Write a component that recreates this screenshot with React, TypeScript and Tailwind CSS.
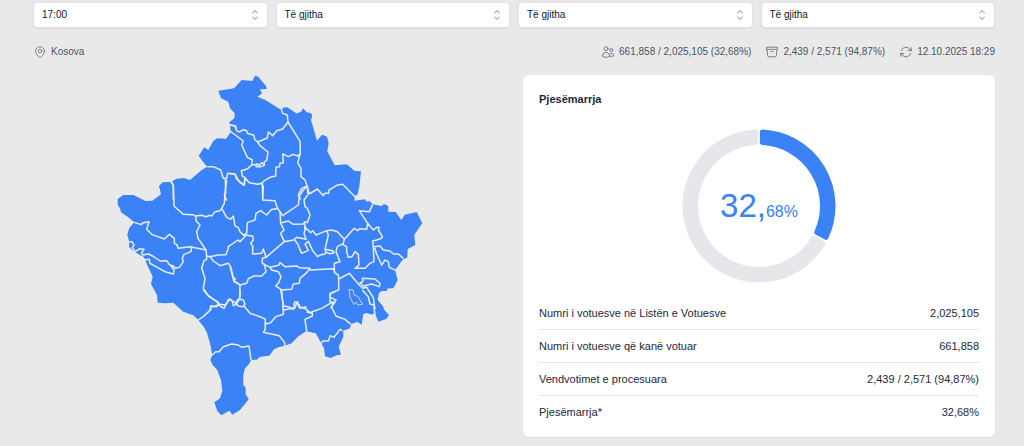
import { HiChevronUpDown, HiOutlineArchiveBox, HiOutlineArrowPath, HiOutlineMapPin, HiOutlineUsers } from 'react-icons/hi2';

const filters = [
  { id: 'time', label: 'Ora', value: '17:00' },
  { id: 'municipality', label: 'Komuna', value: 'Të gjitha' },
  { id: 'center', label: 'Qendra e votimit', value: 'Të gjitha' },
  { id: 'station', label: 'Vendvotimi', value: 'Të gjitha' },
];

const rows = [
  { label: 'Numri i votuesve në Listën e Votuesve', value: '2,025,105' },
  { label: 'Numri i votuesve që kanë votuar', value: '661,858' },
  { label: 'Vendvotimet e procesuara', value: '2,439 / 2,571 (94,87%)' },
  { label: 'Pjesëmarrja*', value: '32,68%' },
];

const outline =
  'M255,75.7 L258,76.5 266,86 266.7,89 260,89.3 262,93.5 257.3,96.7 265,99.7 281.7,110.3 283.3,107.6 287.3,107.3 296.7,113.5 301,111.7 303,108.3 306.7,112.3 311,113.3 312.3,115.3 311,120 317,140.7 322,134.7 327,136.7 328.7,143.3 327.3,151.3 334.7,165.3 346.7,164.3 354.7,171 361,171.3 359.3,186.7 357.3,195 354.3,196 354.7,200.7 365,199.3 366.7,201.7 369.5,201 372.7,204.3 381.7,206 384,204 388.3,206 388.3,211.7 395.7,212 401.3,220 404.7,214.7 416.7,212 422.3,223.3 414.3,234.7 415.3,245 407.7,249 407.3,257.7 403.3,259 395,270 397.7,280 393.3,288.3 387.5,288.5 387,291 381.7,291 379,293 377.7,300 383.3,306.7 384,309.5 389,315.3 386,319 378.3,321.7 375,313.3 371,314.5 367,313 363.3,314 361.7,325 357.3,321.7 351,324.3 350,328.3 343.3,330.7 343.3,336.7 338.7,346.7 341,355 337.3,355 330.7,358 325,356.3 324,348.3 321.3,343.3 315.7,333.3 306,331.3 298,336.5 291.7,343.3 284.7,345.7 278.3,347.3 274,349.3 269.3,355.7 260,356.7 256.7,359.7 251,360 249,364.3 245,368.3 243.3,375 243.3,385 245.7,387.7 245.7,394.3 248.7,399.3 240,410 232.3,414.7 229.3,410.7 221.3,415.3 217.3,411 214.3,402.3 220,398.3 222.3,391 221,380 217.3,370 212.7,365 210.3,360 212.3,355 210,343.3 207,333 204,327.3 198.3,320 193.3,315.3 183.3,311.7 173.3,302.7 165,303.3 157.7,302.7 157,295 151,284 152.7,276.7 145,260 141.7,256 133.3,251 129,246.7 129.3,241.7 127.3,235 129.3,227.7 134.3,222.3 128.3,217.3 121,212.3 120,208.3 117.7,205 117.7,199 123.3,195 133.3,195 140,198.3 145.7,201 152.3,200.7 161,194.3 159,186 162.7,182.3 171,182 176.7,178.7 184,178 190,180 201.7,170 207.3,166.7 203.3,162.3 198.7,155.7 204.3,147.3 208.3,150 213.3,141 217.3,138.3 226,138.7 230.7,132.3 230,125 229.3,122.3 234.3,118.3 234.7,113.3 230,108.3 228.3,101.7 221,98.3 218.3,90.7 234,88.3 241.7,80 252.3,81 Z';

// Municipality borders, grouped by region; each region has its own local origin at triple scale.
const regions = [
  {
    id: 'north-west',
    transform: 'translate(110 70) scale(0.33333)',
    d: 'M360,165 L376,168 380,178 M292,290 L310,290 332,300 340,325 350,325 353,310 375,312 379,326 402,346 405,325 M346,325 L347,370 343,372 350,392 M183,334 L190,345 190,390',
  },
  {
    id: 'north-east',
    transform: 'translate(230 70) scale(0.33333)',
    d: 'M0,165 L15,167 20,182 28,186 40,179 50,182 52,190 72,196 74,208 83,216 112,204 115,186 128,197 140,182 158,177 174,156 M155,121 L158,130 172,135 174,156 210,214 211,250 203,278 213,296 213,320 225,330 232,350 238,372 M0,183 L40,213 35,225 52,262 67,270 65,285 53,296 34,302 37,318 45,323 58,338 82,343 95,340 103,332 120,322 137,318 138,292 148,290 150,280 160,278 158,252 175,260 190,253 203,258 211,250 M83,216 L90,227 114,246 110,272 103,275 103,286 92,290 78,290 80,283 67,285 M80,280 L88,286 95,278 104,285 M45,323 L43,346 28,336 15,312 0,311 M95,340 L100,350 98,388 M238,372 L262,357 280,377 284,370 296,370 297,360 320,346 338,343 375,380 M232,348 L215,355 205,375 212,388',
  },
  {
    id: 'west',
    transform: 'translate(110 180) scale(0.33333)',
    d: 'M183,6 L190,15 192,78 220,103 248,104 257,108 275,106 288,110 300,106 305,108 315,95 330,92 335,85 343,70 345,40 350,0 M335,85 L350,112 362,118 370,108 375,138 385,143 390,155 400,165 408,166 M257,108 L258,122 270,135 260,155 264,175 288,210 290,228 300,230 M73,127 L93,134 100,128 117,125 110,148 125,163 163,177 178,163 193,175 193,190 200,194 205,205 240,200 288,210 M245,200 L243,215 222,223 217,235 220,245 208,262 196,265 190,258 178,254 170,242 150,243 128,228 115,222 98,225 95,218 102,208 90,206 75,215 67,203 72,195 66,185 58,185 M95,228 L105,240 118,238 120,250 165,275 190,282 192,270 183,258 M300,230 L325,225 348,224 355,205 355,200 384,180 390,185 408,166 M300,230 L310,243 330,257 355,250 362,260 370,293 376,296 372,303 390,315 M290,228 L290,238 282,242 275,265 285,295 280,325 295,347 327,370 320,380 302,378 300,390 M327,372 L345,375 360,357 378,370 382,360 389,355 390,315',
  },
  {
    id: 'east',
    transform: 'translate(230 180) scale(0.33333)',
    d: 'M97,8 L98,60 135,62 142,84 158,107 205,75 208,48 220,30 232,18 M142,84 L135,88 125,88 110,105 92,92 78,100 75,120 52,128 50,160 40,165 M48,166 L68,168 70,180 62,190 68,198 68,222 95,220 100,207 108,232 M150,95 L152,130 162,150 152,160 163,185 M155,128 L175,123 190,133 220,132 225,125 232,128 240,105 232,85 225,80 222,60 233,45 M232,18 L233,40 238,42 M225,130 L224,145 235,150 242,158 248,152 258,165 290,152 305,150 322,155 343,178 M163,185 L190,180 200,172 228,178 222,160 228,140 M343,178 L373,145 383,152 390,146 410,148 413,130 388,92 418,95 428,73 M413,130 L430,150 440,142 447,142 445,150 457,170 455,175 440,180 428,183 430,203 432,245 420,250 405,265 375,265 387,255 385,223 375,215 366,230 355,232 350,215 350,200 335,192 M343,178 L340,190 322,200 318,215 330,245 313,250 313,278 325,285 326,297 M290,152 L295,165 285,208 308,212 312,218 300,221 288,217 285,208 M163,185 L108,232 97,235 97,250 120,262 146,256 150,248 165,260 200,258 208,263 240,265 240,270 310,266 315,277 M193,178 L203,192 215,220 235,211 225,192 235,184 248,212 263,230 270,225 285,222 288,215 M120,262 L125,270 145,275 153,290 146,308 137,318 155,330 185,328 190,312 208,310 210,295 230,278 240,265 M102,250 L108,275 95,288 72,288 55,296 50,310 30,315 12,305 0,260 M155,330 L160,390 195,384 200,368 208,375 210,385 230,380 M326,297 L326,330 300,340 300,352 318,360 302,385 M326,297 L358,280 385,312 398,325 410,322 430,353 435,388 M388,310 L399,304 397,295 435,297 450,310 448,320 425,312 400,318 390,308 M434,203 L440,222 455,255 465,240 475,245 478,262 495,270 M430,200 L450,198 460,210 480,213 490,222 505,222 520,235',
  },
  {
    id: 'south',
    transform: 'translate(150 290) scale(0.33333)',
    d: 'M145,90 L160,80 183,58 182,48 190,50 205,45 203,36 175,18 160,0 M205,45 L222,55 236,28 246,32 250,47 262,42 M270,25 L270,0 M268,28 L280,30 285,43 278,50 264,48 260,40 Z M282,48 L300,70 330,80 345,87 347,102 362,98 377,80 400,73 400,45 395,15 392,0 M400,47 L420,52 430,58 434,36 443,36 446,50 465,55 480,68 493,63 515,55 550,35 M345,97 L346,117 340,127 388,137 404,158 404,167 M470,66 L487,70 487,78 465,88 470,124 M550,35 L545,52 558,78 585,88 603,103 M556,38 L540,35 540,12 558,3 M514,160 L518,153 535,153 541,137 552,142 570,118 578,122 M187,195 L197,185 207,185 220,170 245,162 265,165 275,172 297,168 303,210 M637,0 L655,20 660,42 672,45 672,55 675,72',
  },
];

function segment(start: number, end: number) {
  const outer = 74;
  const inner = 63.5;
  const pad = 3.4;
  const point = (radius: number, angle: number) =>
    `${(77 + radius * Math.sin(angle)).toFixed(2)},${(77 - radius * Math.cos(angle)).toFixed(2)}`;
  const from = start * 2 * Math.PI;
  const to = end * 2 * Math.PI;
  const large = end - start > 0.5 ? 1 : 0;
  return `M${point(outer, from + pad / outer)} A${outer},${outer} 0 ${large} 1 ${point(outer, to - pad / outer)} L${point(inner, to - pad / inner)} A${inner},${inner} 0 ${large} 0 ${point(inner, from + pad / inner)} Z`;
}

function KosovoMap() {
  return (
    <svg viewBox="110 70 320 350" className="w-80" role="img" aria-label="Harta e Kosovës">
      <path d={outline} fill="#3b82f6" />
      {regions.map((region) => (
        <path
          key={region.id}
          d={region.d}
          transform={region.transform}
          fill="none"
          stroke="#e9edf5"
          strokeWidth="4.5"
          strokeLinejoin="round"
        />
      ))}
      <path
        d="M349,289.5 L353,290 354,295 358,296.5 361,302 363,304 358,305 356,302 354,304.5 352,301 350,297 Z"
        fill="none"
        stroke="#bfd5fa"
        strokeWidth="1"
      />
    </svg>
  );
}

function TurnoutChart() {
  return (
    <div className="grid place-items-center">
      <svg viewBox="0 0 154 154" className="col-start-1 row-start-1 w-[154px]" aria-hidden="true">
        <path d={segment(0, 0.3268)} fill="#3b82f6" stroke="#3b82f6" strokeWidth="5" strokeLinejoin="round" />
        <path d={segment(0.3268, 1)} fill="#e5e7eb" stroke="#e5e7eb" strokeWidth="5" strokeLinejoin="round" />
      </svg>
      <p className="col-start-1 row-start-1 text-[33px] leading-10 text-[#3b82f6]">
        32,<span className="text-base">68%</span>
      </p>
    </div>
  );
}

export default function App() {
  return (
    <div className="min-h-screen bg-[#e9e9e9] pt-0.5 pr-[29px] pb-2 pl-[33px] font-['Liberation_Sans',Arial,sans-serif] text-gray-800">
      <form className="grid grid-cols-4 gap-2">
        {filters.map((filter) => (
          <div key={filter.id} className="grid items-center">
            <select
              id={filter.id}
              aria-label={filter.label}
              defaultValue={filter.value}
              className="col-start-1 row-start-1 w-full appearance-none rounded border border-gray-300/70 bg-white px-2 py-1 text-[10px] leading-4 text-gray-900 shadow-xs"
            >
              <option>{filter.value}</option>
            </select>
            <HiChevronUpDown className="pointer-events-none col-start-1 row-start-1 mr-[5px] size-4 justify-self-end text-gray-400" />
          </div>
        ))}
      </form>

      <div className="mt-4 flex items-center justify-between text-[10px] leading-4 text-gray-600">
        <span className="flex items-center gap-1">
          <HiOutlineMapPin className="size-3.5 text-gray-500" />
          Kosova
        </span>
        <div className="flex gap-3.5">
          <span className="flex items-center gap-1">
            <HiOutlineUsers className="size-3.5 text-gray-500" />
            661,858 / 2,025,105 (32,68%)
          </span>
          <span className="flex items-center gap-1">
            <HiOutlineArchiveBox className="size-3.5 text-gray-500" />
            2,439 / 2,571 (94,87%)
          </span>
          <span className="flex items-center gap-1">
            <HiOutlineArrowPath className="size-3.5 text-gray-500" />
            12.10.2025 18:29
          </span>
        </div>
      </div>

      <main className="mt-[15px] grid grid-cols-2 items-start gap-[18px]">
        <div className="-mt-[5px] flex justify-center pl-0.5">
          <KosovoMap />
        </div>
        <section className="rounded-md bg-white p-4 pb-[9px] text-[11px] leading-4 shadow-xs">
          <h2 className="mb-[22px] font-bold">Pjesëmarrja</h2>
          <TurnoutChart />
          <dl className="mt-3.5 divide-y divide-gray-200">
            {rows.map((row) => (
              <div key={row.label} className="flex justify-between py-2">
                <dt>{row.label}</dt>
                <dd>{row.value}</dd>
              </div>
            ))}
          </dl>
        </section>
      </main>
    </div>
  );
}
